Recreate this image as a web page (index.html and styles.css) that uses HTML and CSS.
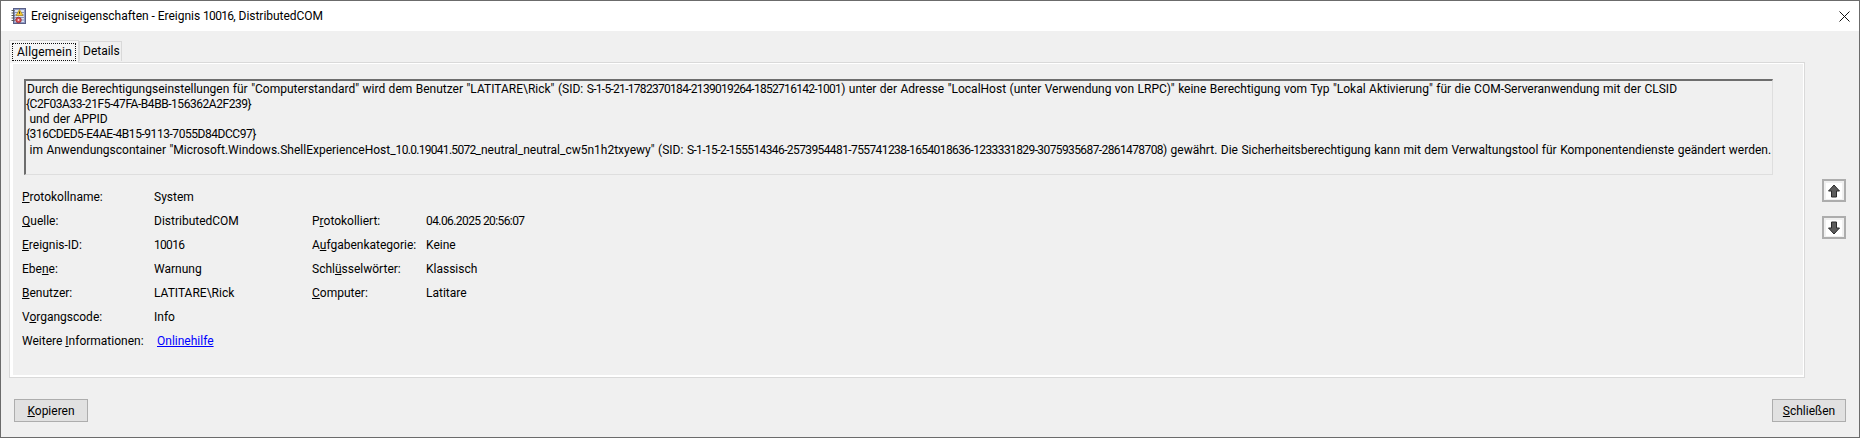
FILE: index.html
```html
<!DOCTYPE html>
<html lang="de">
<head>
<meta charset="utf-8">
<title>Ereigniseigenschaften</title>
<link rel="stylesheet" href="styles.css">
</head>
<body>
<div class="window">
  <header class="titlebar">
    <svg class="appicon" width="18" height="18" viewBox="0 0 18 18">
      <rect x="3.5" y="1.5" width="12" height="15" fill="#8f9cc8" stroke="#5a5f86"/>
      <rect x="5" y="3" width="9" height="12" fill="#dfe4f2"/>
      <path d="M5 5.5h9M5 8h9M5 10.5h9M5 13h9" stroke="#8a93b8"/>
      <path d="M1.5 3.5h3M1.5 6h3M1.5 8.5h3M1.5 11h3M1.5 13.5h3" stroke="#555"/>
      <path d="M9.5 2.5 13 8.5H6z" fill="#f6c92e" stroke="#9a7a10" stroke-width=".6"/>
      <path d="M9.5 4.5v2.2" stroke="#333"/>
      <circle cx="8.5" cy="13" r="2.8" fill="#d8494f" stroke="#8c2a2e" stroke-width=".7"/>
      <circle cx="8.5" cy="13" r="1" fill="#f2d9da"/>
    </svg>
    <span class="title">Ereigniseigenschaften - Ereignis <span class="num">10016</span>, DistributedCOM</span>
    <svg class="close" width="11" height="11" viewBox="0 0 11 11"><path d="M.5.5l10 10M10.5.5l-10 10" stroke="#111" fill="none"/></svg>
  </header>
  <main class="body">
    <div class="tabs">
      <div class="tab active"><span class="focus">Allgemein</span></div>
      <div class="tab details">Details</div>
    </div>
    <div class="content">
      <section class="panel">
        <div class="message">
          <p class="l1">Durch die Berechtigungseinstellungen für "Computerstandard" wird dem Benutzer "LATITARE\Rick" (SID: <span class="num">S-1-5-21-1782370184-2139019264-1852716142-1001</span>) unter der Adresse "LocalHost (unter Verwendung von LRPC)" keine Berechtigung vom Typ "Lokal Aktivierung" für die COM-Serveranwendung mit der CLSID</p>
          <p class="guid">{C2F03A33-21F5-47FA-B4BB-156362A2F239}</p>
          <p>&nbsp;und der APPID</p>
          <p class="guid">{316CDED5-E4AE-4B15-9113-7055D84DCC97}</p>
          <p class="l5">&nbsp;im Anwendungscontainer "Microsoft.Windows.ShellExperienceHost_<span class="num">10.0.19041.5072</span>_neutral_neutral_cw5n1h2txyewy" (SID: <span class="sid">S-1-15-2-155514346-2573954481-755741238-1654018636-1233331829-3075935687-2861478708</span>) gewährt. Die Sicherheitsberechtigung kann mit dem Verwaltungstool für Komponentendienste geändert werden.</p>
        </div>
        <div class="grid">
          <span><u>P</u>rotokollname:</span><span>System</span><span></span><span></span>
          <span><u>Q</u>uelle:</span><span>DistributedCOM</span><span>P<u>r</u>otokolliert:</span><span class="date">04.06.2025 20:56:07</span>
          <span><u>E</u>reignis-ID:</span><span class="num">10016</span><span>A<u>u</u>fgabenkategorie:</span><span>Keine</span>
          <span>Ebe<u>n</u>e:</span><span>Warnung</span><span>Schl<u>ü</u>sselwörter:</span><span>Klassisch</span>
          <span><u>B</u>enutzer:</span><span>LATITARE\Rick</span><span><u>C</u>omputer:</span><span>Latitare</span>
          <span>V<u>o</u>rgangscode:</span><span>Info</span><span></span><span></span>
          <span>Weitere <u>I</u>nformationen:</span><a class="link" href="#">Onlinehilfe</a><span></span><span></span>
        </div>
      </section>
      <div class="nav">
        <button class="btn arrow"><svg width="16" height="16" viewBox="0 0 16 16"><rect width="16" height="16" fill="#fff"/><path d="M8 2 13.5 8H10.5V14H5.5V8H2.5z" fill="#5c5c5c" stroke="#2a2a2a"/></svg></button>
        <button class="btn arrow"><svg width="16" height="16" viewBox="0 0 16 16"><rect width="16" height="16" fill="#fff"/><path d="M8 14 13.5 8H10.5V2H5.5V8H2.5z" fill="#5c5c5c" stroke="#2a2a2a"/></svg></button>
      </div>
    </div>
    <footer class="actions">
      <button class="btn text"><u>K</u>opieren</button>
      <button class="btn text"><u>S</u>chließen</button>
    </footer>
  </main>
</div>
</body>
</html>
```
FILE: styles.css
```css
* { box-sizing: border-box; }
html, body { margin: 0; padding: 0; }
body { width: 1860px; height: 438px; overflow: hidden; font-family: Roboto, "Open Sans", sans-serif; font-size: 12px; line-height: 16px; color: #000; background: #f0f0f0; }
.window { width: 1860px; height: 438px; border: 1px solid #6b6b6b; display: flex; flex-direction: column; background: #f0f0f0; }
.titlebar { height: 30px; flex: none; background: #fff; display: flex; align-items: center; padding-left: 9px; padding-right: 9px; }
.appicon { flex: none; }
.title { margin-left: 3px; flex: 1; letter-spacing: -.03px; }
.close { flex: none; }
.num { letter-spacing: -.7px; }
.sid { letter-spacing: -.6px; }
.date { letter-spacing: -.58px; }
.body { flex: 1; display: flex; flex-direction: column; padding: 8px 13px 13px 8px; }
.tabs { display: flex; align-items: flex-end; height: 23px; position: relative; z-index: 1; }
.tab { height: 20px; padding: 0 5px; border: 1px solid #d9d9d9; border-bottom: 0; line-height: 19px; background: #f0f0f0; margin-bottom: 1px; }
.tab.details { width: 43px; padding: 0 0 0 3px; }
.tab.active { height: 23px; width: 70px; margin-bottom: -1px; padding: 2px; background: #f5f5f5; }
.focus { display: block; height: 18px; line-height: 16px; border: 1px dotted #111; padding: 0 3px 0 4px; letter-spacing: .2px; }
.content { display: flex; height: 316px; }
.panel { width: 1796px; height: 316px; border: 1px solid #d9d9d9; box-shadow: inset 3px 1px 0 #fff, inset -1px -2px 0 #fff; background: #f0f0f0; padding: 16px 0 0 14px; }
.message { width: 1749px; height: 96px; border: 1px solid #dedede; border-top: 2px solid #6d6d6d; border-left: 2px solid #6d6d6d; padding: 1px 0 0; word-spacing: .5px; }
.message p { margin: 0; height: 15px; line-height: 15px; white-space: nowrap; }
.message .l1 { text-indent: 1px; }
.message .l5 { margin-top: 1px; }
.guid { letter-spacing: -.45px; }
.grid { display: grid; grid-template-columns: 132px 158px 114px 1fr; grid-auto-rows: 24px; margin-top: 14px; margin-left: -2px; }
.grid span, .grid a { display: block; line-height: 16px; white-space: nowrap; }
.link { color: #0000ff; padding-left: 3px; }
.nav { display: flex; flex-direction: column; gap: 14px; margin: 117px 0 0 17px; }
.btn { font: inherit; color: inherit; background: #e1e1e1; border: 1px solid #adadad; padding: 0; }
.arrow { width: 24px; height: 23px; display: flex; align-items: center; justify-content: center; background: #f0f0f0; border: 2px solid #adadad; }
.actions { display: flex; justify-content: space-between; padding: 21px 0 0 5px; }
.text { width: 74px; height: 23px; }
```
